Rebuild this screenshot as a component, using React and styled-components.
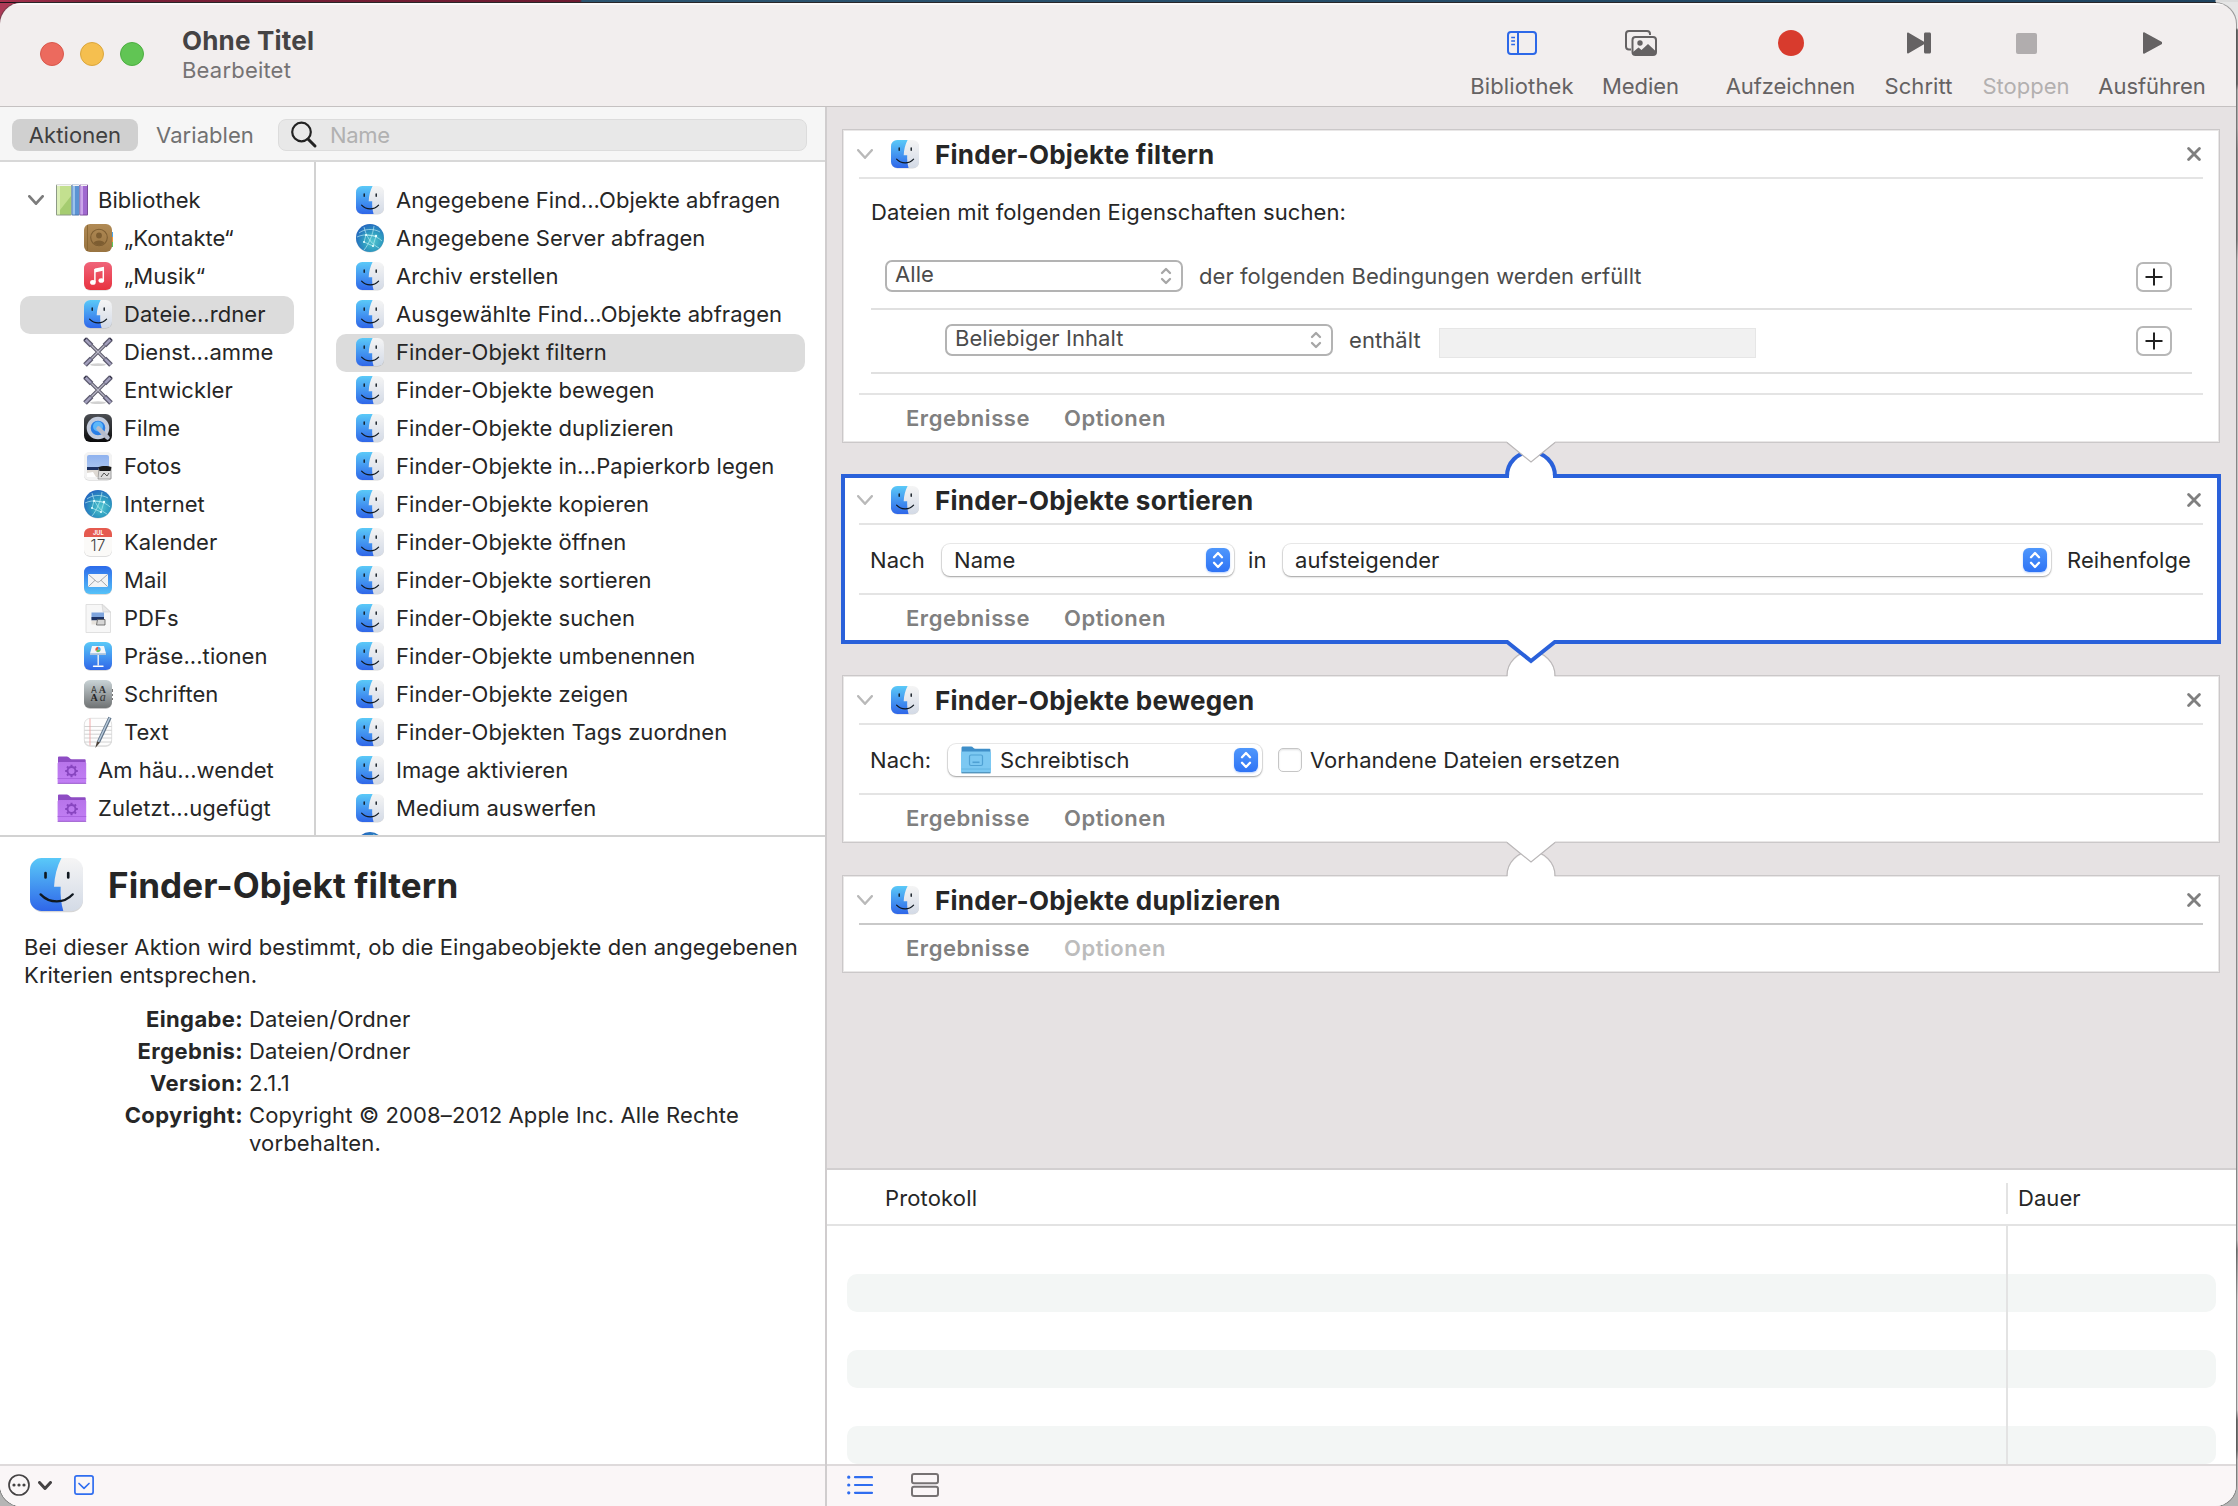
import React from "react";
import styled, { createGlobalStyle, css } from "styled-components";

const GlobalStyle = createGlobalStyle`
  * { box-sizing: border-box; }
  body {
    margin: 0;
    overflow: hidden;
    font-family: Inter, "Liberation Sans", sans-serif;
    font-size: 22px;
    line-height: 28px;
    letter-spacing: 0.06px;
    color: #262626;
  }
  svg { display: block; flex: none; }
`;

/* ---------- window ---------- */

const Desktop = styled.div`
  width: 2238px;
  height: 1506px;
  padding: 3px 2px 0 0;
  background:
    linear-gradient(#1b1419, #1b1419) 0 2px / 2216px 1px no-repeat,
    linear-gradient(90deg, #a8324f 0, #7c2038 90px, #6d1a30 580px, #2d5570 582px, #1f4460 2215px, #dcdcdc 2216px) 0 0 / 100% 2px no-repeat,
    linear-gradient(90deg, #ad3a57 0, #ad3a57 60px, transparent 60px) 0 0 / 100% 40px no-repeat,
    linear-gradient(#e6e6e6 0 28px, #6d6d6d 30px 84px, #a9a9a9 90px 128px, #8e8e8e 150px 240px, #c4c4c4 260px 1240px, #8a8a8a 1250px, #d0d0d0 1300px 1410px, #777 1420px 1450px, #b5b5b5 1460px);
`;

const Window = styled.div`
  height: 1503px;
  display: flex;
  flex-direction: column;
  border-radius: 21px;
  overflow: hidden;
  background: #f2eeee;
  box-shadow: 0 0 0 1px rgba(60, 60, 60, 0.45);
`;

const TitleBar = styled.header`
  flex: none;
  height: 104px;
  display: flex;
  padding: 0 30px 0 40px;
  border-bottom: 1px solid #c5c1c1;
  box-shadow: inset 0 2px 0 #fbf9f9;
`;

const Lights = styled.div`
  display: flex;
  gap: 16px;
  padding-top: 39px;
`;

const Light = styled.span`
  width: 24px;
  height: 24px;
  border-radius: 50%;
  background: ${(p) => p.$color};
  border: 1px solid ${(p) => p.$edge};
`;

const Heading = styled.div`
  margin-left: 38px;
  padding-top: 22px;
  flex: 1;
`;

const DocTitle = styled.div`
  font-size: 26px;
  font-weight: 700;
  line-height: 31px;
  letter-spacing: 0.2px;
  color: #454344;
`;

const DocState = styled.div`
  letter-spacing: 0.2px;
  color: #767374;
`;

const Tool = styled.div`
  width: ${(p) => p.$width}px;
  margin-left: ${(p) => p.$gap}px;
  padding-top: 27px;
  display: flex;
  flex-direction: column;
  align-items: center;
  color: ${(p) => (p.$off ? "#b3b0b0" : "#656263")};
`;

const ToolIcon = styled.div`
  height: 26px;
  display: flex;
  align-items: center;
`;

const ToolLabel = styled.span`
  margin-top: 16px;
  white-space: nowrap;
  letter-spacing: ${(p) => p.$ls}px;
`;

const Panes = styled.div`
  flex: 1;
  min-height: 0;
  display: flex;
`;

const Sidebar = styled.aside`
  width: 827px;
  border-right: 2px solid #d0cdce;
  display: flex;
  flex-direction: column;
  background: #fff;
`;

const Main = styled.main`
  flex: 1;
  display: flex;
  flex-direction: column;
  background: #e6e2e3;
`;

/* ---------- sidebar ---------- */

const FilterBar = styled.div`
  flex: none;
  height: 55px;
  display: flex;
  align-items: flex-start;
  padding: 12px 18px 0 12px;
  background: #f6f6f6;
  border-bottom: 2px solid #d8d8d8;
`;

const Segment = styled.div`
  width: ${(p) => p.$width}px;
  height: 32px;
  border-radius: 8px;
  display: flex;
  align-items: center;
  justify-content: center;
  color: ${(p) => (p.$active ? "#3f3f3f" : "#717171")};
  background: ${(p) => (p.$active ? "#d0d0d0" : "transparent")};
`;

const Search = styled.div`
  flex: 1;
  height: 32px;
  margin-left: 6px;
  padding-left: 11px;
  display: flex;
  align-items: center;
  gap: 12px;
  border-radius: 8px;
  border: 1px solid #dcdcdc;
  background: #e8e8e8;
  color: #b1b1b1;
  letter-spacing: -0.3px;
`;

const Browser = styled.div`
  flex: none;
  height: 675px;
  display: flex;
  border-bottom: 2px solid #d2d2d2;
  overflow: hidden;
`;

const Column = styled.div`
  width: ${(p) => p.$width}px;
  flex: none;
  padding: 20px 20px 0;
  overflow: hidden;
  border-right: ${(p) => (p.$divided ? "2px solid #d2d2d2" : "0")};
`;

const Item = styled.div`
  height: 38px;
  display: flex;
  align-items: center;
  border-radius: 10px;
  padding: 0 0 2px ${(p) => p.$indent}px;
  gap: 12px;
  white-space: nowrap;
  background: ${(p) => (p.$selected ? "#dcdcdc" : "transparent")};
`;

const Disclosure = styled.span`
  width: 16px;
`;

const IconSlot = styled.span`
  width: 32px;
  margin: 0 -2px 0 ${(p) => p.$shift || 0}px;
`;

const Info = styled.section`
  flex: 1;
  padding: 21px 20px 0 24px;
`;

const InfoHead = styled.div`
  display: flex;
  align-items: center;
  gap: 25px;
  padding-left: 6px;
`;

const InfoTitle = styled.h1`
  margin: 0;
  font-size: 35px;
  font-weight: 700;
  line-height: 44px;
  letter-spacing: 0.1px;
`;

const InfoText = styled.p`
  margin: 22px -10px 16px 0;
  letter-spacing: 0.1px;
`;

const Facts = styled.dl`
  margin: 0;
  display: grid;
  grid-template-columns: 219px 1fr;
  column-gap: 6px;
  row-gap: 4px;
`;

const Term = styled.dt`
  text-align: right;
  font-weight: 700;
  letter-spacing: 0.38px;
`;

const Fact = styled.dd`
  margin: 0;
  letter-spacing: 0.14px;
`;

const BottomBar = styled.div`
  flex: none;
  height: 42px;
  display: flex;
  align-items: center;
  border-top: 2px solid #dedadb;
  background: #faf6f7;
  padding-left: ${(p) => p.$pad}px;
  padding-bottom: 2px;
`;

const Spacer = styled.span`
  width: ${(p) => p.$width}px;
`;

/* ---------- workflow ---------- */

const Canvas = styled.div`
  flex: 1;
  padding: 22px 16px 0 15px;
  display: flex;
  flex-direction: column;
  gap: 32px;
`;

const CardBox = styled.section`
  position: relative;
  z-index: ${(p) => p.$level};
  background: #fff;
  box-shadow: ${(p) =>
    p.$selected
      ? "inset 0 0 0 3px #2a61da, 0 0 0 1px #2a61da"
      : "inset 0 0 0 1px #cbc8c9, inset 0 0 0 2px #e9e7e7"};
`;

const joint = css`
  position: absolute;
  left: calc(50% - 30px);
`;

const Socket = styled.svg`
  ${joint}
  top: -30px;
`;

const Plug = styled.svg`
  ${joint}
  top: calc(100% - 6px);
`;

const CardHead = styled.div`
  height: 48px;
  padding: 2px 19px 0 15px;
  display: flex;
  align-items: center;
`;

const CardTitle = styled.h2`
  flex: 1;
  margin: 1px 0 0 16px;
  font-size: 26px;
  line-height: 31px;
  font-weight: 700;
  letter-spacing: 0.25px;
`;

const Rule = styled.div`
  height: 2px;
  margin: 0 17px;
  background: ${(p) => (p.$strong ? "#c9c9c9" : "#e4e4e4")};
`;

const CardFoot = styled.div`
  height: 48px;
  padding: 0 0 2px 64px;
  display: flex;
  align-items: center;
  font-weight: 600;
  letter-spacing: 0.55px;
  color: #808080;
`;

const FootTab = styled.span`
  width: 158px;
  color: ${(p) => (p.$off ? "#bcbcbc" : "inherit")};
`;

const CardRow = styled.div`
  height: 68px;
  padding: 2px 27px 0 28px;
  display: flex;
  align-items: center;
`;

const RowLabel = styled.span`
  width: ${(p) => p.$width}px;
  margin-left: ${(p) => p.$gap || 0}px;
  white-space: nowrap;
`;

const Popup = styled.div`
  height: 32px;
  width: ${(p) => (p.$width ? p.$width + "px" : "auto")};
  flex: ${(p) => (p.$width ? "none" : 1)};
  padding: 0 4px 0 ${(p) => p.$pad}px;
  display: flex;
  align-items: center;
  gap: 9px;
  border-radius: 8px;
  background: #fff;
  box-shadow: 0 0 0 1px rgba(0, 0, 0, 0.08), 0 1px 2px rgba(0, 0, 0, 0.32);
`;

const PopupText = styled.span`
  flex: 1;
`;

const Stepper = styled.span`
  width: 24px;
  height: 24px;
  border-radius: 6px;
  display: flex;
  align-items: center;
  justify-content: center;
  background: linear-gradient(#4f97fc, #2e73f5);
  box-shadow: 0 1px 2px rgba(46, 115, 245, 0.35);
`;

const Checkbox = styled.span`
  width: 24px;
  height: 24px;
  margin: 0 8px 0 16px;
  border-radius: 5px;
  border: 1px solid #c6c6c6;
  box-shadow: inset 0 1px 2px rgba(0, 0, 0, 0.12);
`;

const Rules = styled.div`
  padding: 19px 28px 19px 29px;
`;

const RulesIntro = styled.div`
  margin-bottom: 18px;
  letter-spacing: 0.11px;
`;

const Condition = styled.div`
  height: ${(p) => p.$height}px;
  padding: 0 20px ${(p) => p.$lift || 0}px ${(p) => p.$indent}px;
  display: flex;
  align-items: center;
  border-bottom: 2px solid #e0e0e0;
  color: #4b4b4b;
`;

const OutlinePopup = styled.div`
  width: ${(p) => p.$width}px;
  height: 32px;
  margin-right: 16px;
  padding: 0 9px 4px 8px;
  display: flex;
  align-items: center;
  justify-content: space-between;
  border: 2px solid #b3b3b3;
  border-radius: 7px;
`;

const StepArrows = styled.svg`
  margin-top: 3px;
`;

const Field = styled.span`
  width: 317px;
  height: 30px;
  margin: 5px 0 0 18px;
  background: #f1f1f1;
  border: 1px solid #e6e6e6;
`;

const AddButton = styled.span`
  width: 36px;
  height: 30px;
  margin: 2px 0 0 auto;
  border: 2px solid #b7b7b7;
  border-radius: 7px;
  display: flex;
  align-items: center;
  justify-content: center;
`;

/* ---------- log ---------- */

const Log = styled.section`
  flex: none;
  height: 296px;
  border-top: 2px solid #d2cfd0;
  background: #fff;
  display: flex;
  flex-direction: column;
`;

const LogHead = styled.div`
  height: 56px;
  padding: 2px 0 0 58px;
  display: flex;
  align-items: center;
  border-bottom: 2px solid #e3e3e3;
`;

const LogName = styled.span`
  flex: 1;
  letter-spacing: 0.15px;
`;

const LogTime = styled.span`
  width: 230px;
  height: 31px;
  padding: 1px 0 0 10px;
  border-left: 2px solid #e3e3e3;
`;

const LogBody = styled.div`
  flex: 1;
  display: flex;
`;

const LogColumn = styled.div`
  padding: ${(p) => (p.$last ? "10px 20px 0 0" : "10px 0 0 20px")};
  flex: ${(p) => (p.$last ? "none" : 1)};
  width: ${(p) => (p.$last ? "230px" : "auto")};
  border-left: ${(p) => (p.$last ? "2px solid #e3e3e3" : "0")};
`;

const Stripe = styled.div`
  height: 38px;
  background: ${(p) => (p.$filled ? "#f3f6f5" : "transparent")};
  border-radius: ${(p) => (p.$last ? "0 10px 10px 0" : "10px 0 0 10px")};
`;

/* ---------- drawings ---------- */

const DefsSvg = styled.svg`
  position: absolute;
`;

const Defs = () => (
  <DefsSvg width="0" height="0">
    <defs>
      <linearGradient id="fBlue" x1="0" y1="0" x2="0" y2="1">
        <stop offset="0" stopColor="#5ac9f8" />
        <stop offset="1" stopColor="#2f66e9" />
      </linearGradient>
      <linearGradient id="fPale" x1="0" y1="0" x2="0" y2="1">
        <stop offset="0" stopColor="#f5f5f5" />
        <stop offset="1" stopColor="#d3dae6" />
      </linearGradient>
      <radialGradient id="globe" cx="0.6" cy="0.62" r="0.65">
        <stop offset="0" stopColor="#52c6cf" />
        <stop offset="0.5" stopColor="#2f9dc0" />
        <stop offset="1" stopColor="#2468c0" />
      </radialGradient>
      <linearGradient id="red" x1="0" y1="0" x2="0" y2="1">
        <stop offset="0" stopColor="#f0647a" />
        <stop offset="1" stopColor="#e8323f" />
      </linearGradient>
      <linearGradient id="brown" x1="0" y1="0" x2="0" y2="1">
        <stop offset="0" stopColor="#b08a55" />
        <stop offset="1" stopColor="#997441" />
      </linearGradient>
      <linearGradient id="dark" x1="0" y1="0" x2="0" y2="1">
        <stop offset="0" stopColor="#4c4f54" />
        <stop offset="1" stopColor="#0a0a0b" />
      </linearGradient>
      <linearGradient id="mail" x1="0" y1="0" x2="0" y2="1">
        <stop offset="0" stopColor="#2c6aea" />
        <stop offset="1" stopColor="#56c2f8" />
      </linearGradient>
      <linearGradient id="grey" x1="0" y1="0" x2="0" y2="1">
        <stop offset="0" stopColor="#c9d3d6" />
        <stop offset="1" stopColor="#6f7273" />
      </linearGradient>
      <linearGradient id="sky" x1="0" y1="0" x2="0" y2="1">
        <stop offset="0" stopColor="#8fb2ef" />
        <stop offset="1" stopColor="#b9cff0" />
      </linearGradient>
      <linearGradient id="violet" x1="0" y1="0" x2="0" y2="1">
        <stop offset="0" stopColor="#b774ea" />
        <stop offset="1" stopColor="#c27ff5" />
      </linearGradient>
    </defs>
  </DefsSvg>
);

const Finder = ({ size = 28 }) => (
  <svg width={size} height={size} viewBox="0 0 28 28" overflow="visible">
    <rect x="0.4" y="1" width="27.6" height="27.6" rx="6.2" fill="#000" opacity="0.16" />
    <rect width="28" height="28" rx="6.2" fill="url(#fPale)" />
    <path d="M6.2 0H16.6C14.2 4.6 13 9.6 12.7 15.2H16.2C16 19.6 16.4 24 17.6 28H6.2A6.2 6.2 0 0 1 0 21.8V6.2A6.2 6.2 0 0 1 6.2 0Z" fill="url(#fBlue)" />
    <path d="M8.2 7.9V10.3M20.2 7.9V10.3" stroke="#101820" strokeWidth="1.4" strokeLinecap="round" />
    <path d="M5.6 19.2C10.4 24.2 18 24.2 22.6 19.2" fill="none" stroke="#101820" strokeWidth="1.2" strokeLinecap="round" />
  </svg>
);

const Globe = () => (
  <svg width="28" height="28" viewBox="0 0 28 28" overflow="visible">
    <circle cx="14" cy="14.6" r="14" fill="#000" opacity="0.16" />
    <circle cx="14" cy="14" r="14" fill="url(#globe)" />
    <path d="M3 9C8 5 17 4 24 8M1 13C9 9 20 11 26 17M8 3C10 12 15 20 23 24M18 2C17 10 13 20 8 26M10 11L20 12L17 22L8 18Z" fill="none" stroke="#c9f5f8" strokeWidth="0.8" opacity="0.75" />
    <g fill="#e8ffff"><circle cx="10" cy="11" r="1.1" /><circle cx="20" cy="12" r="1.2" /><circle cx="17" cy="22" r="1.1" /><circle cx="8" cy="18" r="1" /></g>
  </svg>
);

const Books = () => (
  <svg width="32" height="32" viewBox="0 0 32 32">
    <rect x="0" y="0.5" width="15.5" height="31" rx="1" fill="#8d9a86" />
    <path d="M1 2H15V30.5H1Z" fill="#a5cc70" />
    <path d="M1 2H4V30.5H1Z" fill="#dcefb9" />
    <path d="M4 2H15V12L4 26Z" fill="#c3e08f" />
    <rect x="15.5" y="0.5" width="8" height="31" rx="1" fill="#4d75a8" />
    <path d="M16.5 2H23V30.5H16.5Z" fill="#5b93d3" />
    <path d="M16.5 2H19V30.5H16.5Z" fill="#9cc3ec" />
    <rect x="23.5" y="0.5" width="8.5" height="31" rx="1" fill="#7a4c9a" />
    <path d="M24.3 2H31V30.5H24.3Z" fill="#9f68cf" />
    <path d="M24.3 2H27V30.5H24.3Z" fill="#cba5ea" />
    <path d="M1 1.2H15M16.5 1.2H23M24.5 1.2H31" stroke="#f3f3f3" strokeWidth="1.6" />
  </svg>
);

const Contacts = () => (
  <svg width="28" height="28" viewBox="0 0 28 28" overflow="visible">
    <path d="M27 8H29V13H27Z" fill="#4aa4e8" /><path d="M27 13H29V18H27Z" fill="#f0953a" /><path d="M27 18H29V23H27Z" fill="#5cc65a" />
    <rect width="28" height="28" rx="6" fill="url(#brown)" />
    <path d="M3.5 1V27" stroke="#84622f" strokeWidth="0.8" />
    <circle cx="15" cy="13.5" r="8.3" fill="none" stroke="#7d5d31" strokeWidth="1.1" />
    <circle cx="15" cy="11.5" r="2.9" fill="#7d5d31" />
    <path d="M9.5 19C10.5 15.6 19.5 15.6 20.5 19C17.5 22 12.5 22 9.5 19Z" fill="#7d5d31" />
  </svg>
);

const Music = () => (
  <svg width="28" height="28" viewBox="0 0 28 28" overflow="visible">
    <rect y="0.8" width="28" height="28" rx="6.2" fill="#000" opacity="0.15" />
    <rect width="28" height="28" rx="6.2" fill="url(#red)" />
    <path d="M10.8 6.6L20 4.7V8.6L10.8 10.5Z" fill="#fff" />
    <path d="M10.9 7V20M19.3 5.5V18.2" stroke="#fff" strokeWidth="1.5" />
    <ellipse cx="8.9" cy="20.4" rx="2.8" ry="2.3" fill="#fff" /><ellipse cx="17.3" cy="18.5" rx="2.8" ry="2.3" fill="#fff" />
  </svg>
);

const Tools = () => (
  <svg width="28" height="28" viewBox="0 0 28 28" overflow="visible">
    <ellipse cx="14" cy="26.7" rx="8" ry="1.4" fill="#000" opacity="0.18" />
    <path d="M3 3L25 25M25 3L3 25" stroke="#5d5b6b" strokeWidth="3.4" />
    <path d="M3 3L25 25M25 3L3 25" stroke="#b9b7c6" strokeWidth="1.3" />
    <path d="M1 1L7.500 7.500M27 1L20.500 7.500M1 27L7.500 20.500M27 27L20.500 20.500" stroke="#5f5d72" strokeWidth="5.200" />
    <path d="M1.300 1.300L7 7M26.700 1.300L21 7M1.300 26.700L7 21M26.700 26.700L21 21" stroke="#a3a0bd" strokeWidth="2.400" />
    <path d="M0 2.200L2.200 0M28 2.200L25.800 0" stroke="#37354a" strokeWidth="1.500" />
  </svg>
);

const QuickTime = () => (
  <svg width="28" height="28" viewBox="0 0 28 28">
    <rect width="28" height="28" rx="6.2" fill="url(#dark)" />
    <circle cx="14" cy="14" r="9.3" fill="#2a7fe6" stroke="#c3cbdb" strokeWidth="4" />
    <circle cx="14" cy="12.5" r="5" fill="#5db7fa" />
    <path d="M14.5 14.5L23.500 23.500" stroke="#b6bccb" strokeWidth="4.5" strokeLinecap="round" />
  </svg>
);

const Photos = () => (
  <svg width="28" height="28" viewBox="0 0 28 28" overflow="visible">
    <rect y="0.8" width="28" height="28" rx="5" fill="#000" opacity="0.14" />
    <rect width="28" height="28" rx="5" fill="#f3f3f3" />
    <rect x="3" y="3" width="22" height="22" rx="2" fill="url(#sky)" />
    <path d="M3 15H25V18H3Z" fill="#1d3263" />
    <path d="M3 18H25V25H3Z" fill="#ded9d3" />
    <path d="M3 21L9 20L12 25H3Z" fill="#fff" />
    <path d="M15 16H27V27H14Z" fill="#dcdcdc" stroke="#888" strokeWidth="0.7" />
    <path d="M14.5 15C17 13.5 25 13.5 27.5 15L26.5 19H15.5Z" fill="#191919" />
    <path d="M17 25L20 21L23 24L25 21" fill="none" stroke="#555" strokeWidth="1" />
  </svg>
);

const Tiny = styled.text`
  font-family: Inter, sans-serif;
  letter-spacing: 0;
`;

const Serif = styled.text`
  font-family: "Liberation Serif", serif;
  letter-spacing: 0;
`;

const Calendar = () => (
  <svg width="28" height="28" viewBox="0 0 28 28" overflow="visible">
    <rect y="0.8" width="28" height="28" rx="6" fill="#000" opacity="0.18" />
    <rect width="28" height="28" rx="6" fill="#fbfaf8" />
    <path d="M0 9V6A6 6 0 0 1 6 0H22A6 6 0 0 1 28 6V9Z" fill="#e55a4f" />
    <Tiny x="14.3" y="7.3" textAnchor="middle" fontSize="5.6" fontWeight="700" fill="#fff">JUL</Tiny>
    <Tiny x="14" y="23" textAnchor="middle" fontSize="15.5" fontWeight="300" fill="#3d3d3d">17</Tiny>
  </svg>
);

const Mail = () => (
  <svg width="28" height="28" viewBox="0 0 28 28" overflow="visible">
    <rect y="0.8" width="28" height="28" rx="6.2" fill="#000" opacity="0.18" />
    <rect width="28" height="28" rx="6.2" fill="url(#mail)" />
    <rect x="4" y="8" width="20" height="13" rx="1.2" fill="#f3f4f5" />
    <path d="M4.5 8.5L12.5 15.5C13.5 16.3 14.5 16.3 15.5 15.5L23.5 8.5M4.5 20.5L11 14.3M23.5 20.5L17 14.3" fill="none" stroke="#9a9da1" strokeWidth="0.9" />
  </svg>
);

const Pdf = () => (
  <svg width="28" height="29" viewBox="0 0 28 29">
    <path d="M2 0.5H19L26.5 8V28.5H2Z" fill="#f7f7f7" stroke="#dcdcdc" strokeWidth="0.9" />
    <path d="M18 0.5L19 8H26.5Z" fill="#e8e8e8" stroke="#cfcfcf" strokeWidth="0.6" />
    <rect x="7.5" y="8.5" width="12.5" height="7" fill="#7ea4dc" />
    <rect x="7.5" y="13" width="12.5" height="3.5" fill="#1d3263" />
    <rect x="7.5" y="16.5" width="6" height="4" fill="#e6e2dc" />
    <path d="M13.5 15.5H21V21H12.5Z" fill="#d6d6d6" stroke="#5b5b5b" strokeWidth="0.8" />
  </svg>
);

const Keynote = () => (
  <svg width="28" height="28" viewBox="0 0 28 28" overflow="visible">
    <rect y="0.8" width="28" height="28" rx="6.2" fill="#000" opacity="0.18" />
    <rect width="28" height="28" rx="6.2" fill="url(#fBlue)" />
    <path d="M8 4H20L22 11.5H6Z" fill="#f4f6f9" />
    <path d="M6 11.5H22V12.8H6Z" fill="#c5ccd6" />
    <path d="M14.2 13V23.5" stroke="#e9edf3" strokeWidth="1.5" />
    <path d="M9.5 24.200H19" stroke="#fff" strokeWidth="1.4" strokeLinecap="round" />
    <path d="M14 7.5V4.8A2.7 2.7 0 0 1 16.6 8.2Z" fill="#4ba8f0" />
    <path d="M14 7.5L16.6 8.2A2.7 2.7 0 0 1 11.8 9Z" fill="#63c15b" />
    <path d="M14 7.5L11.8 9A2.7 2.7 0 0 1 14 4.8Z" fill="#e8543f" />
  </svg>
);

const Fonts = () => (
  <svg width="28" height="28" viewBox="0 0 28 28" overflow="visible">
    <rect y="0.8" width="28" height="28" rx="6" fill="#000" opacity="0.3" />
    <rect width="28" height="28" rx="6" fill="url(#grey)" />
    <path d="M28.5 9V12M28.5 14V16M28.5 18V20" stroke="#777" strokeWidth="1" />
    <Tiny x="7" y="13" fontSize="8.5" fill="#333">A</Tiny>
    <Serif x="14.8" y="13" fontSize="10" fontWeight="700" fill="#333">A</Serif>
    <Serif x="6.5" y="21" fontSize="10" fontWeight="700" fill="#222">A</Serif>
    <Serif x="15.8" y="21" fontSize="12" fontStyle="italic" fill="#333">a</Serif>
  </svg>
);

const TextDoc = () => (
  <svg width="28" height="28" viewBox="0 0 28 28" overflow="visible">
    <rect y="0.8" width="28" height="28" rx="6" fill="#000" opacity="0.15" />
    <rect x="0.3" y="0.3" width="27.4" height="27.4" rx="6" fill="#fdfdfd" stroke="#dadada" strokeWidth="0.7" />
    <path d="M0.5 8.5H27.5M0.5 12.3H27.5M0.5 16.2H27.5M0.5 20H27.5M0.500 24H27.5" stroke="#c6c6c6" strokeWidth="0.8" />
    <path d="M6 0.5V27.5" stroke="#eda2a2" strokeWidth="0.9" />
    <path d="M26 -0.500L14.5 24" stroke="#5f7388" strokeWidth="3.4" />
    <path d="M25.8 -0.500L14.3 24" stroke="#b9cbdc" strokeWidth="1.4" />
    <path d="M13 23.2L16 24.6L11.3 30Z" fill="#4a4038" />
  </svg>
);

const SmartFolder = () => (
  <svg width="32" height="28" viewBox="0 0 32 28" overflow="visible">
    <path d="M2 1.5C2 0.8 2.6 0.5 3.3 0.5H11C13 0.5 13.5 3.2 15.5 3.2H28.5C29.3 3.2 29.7 3.7 29.7 4.4V12H2Z" fill="#8e4cc4" />
    <rect x="1.6" y="6" width="28.6" height="21.5" rx="1.5" fill="url(#violet)" />
    <path d="M1.6 22.5H30.2" stroke="#a45edb" strokeWidth="0.8" />
    <path d="M1.6 27.3H30.2" stroke="#9a5ccc" strokeWidth="1" />
    <g transform="translate(15.5 15)" stroke="#8745bf" fill="none">
      <circle r="4" strokeWidth="1.9" />
      <path d="M0 -6.3V-4.5M0 6.3V4.5M-6.3 0H-4.5M6.3 0H4.5M-4.5 -4.5L-3.2 -3.2M4.5 4.5L3.2 3.2M-4.5 4.5L-3.2 3.2M4.5 -4.5L3.2 -3.2" strokeWidth="2" />
    </g>
  </svg>
);

const DesktopFolder = () => (
  <svg width="30" height="28" viewBox="0 0 30 28">
    <path d="M0.5 2C0.5 1 1 0.5 2 0.5H10C12 0.5 12.5 2.8 14.5 2.8H28C29 2.8 29.5 3.3 29.5 4.2V12H0.5Z" fill="#3f8fc9" />
    <rect x="0" y="5.5" width="30" height="21.5" rx="1.5" fill="#7cc8f2" />
    <path d="M0.5 23H29.5" stroke="#5cb0df" strokeWidth="0.8" />
    <path d="M0.5 26.8H29.5" stroke="#4a8bb3" strokeWidth="1.2" />
    <rect x="8.5" y="9" width="13" height="10.5" rx="1.5" fill="none" stroke="#4fa1d4" strokeWidth="1.2" />
    <path d="M11.5 16.3H18.5" stroke="#4fa1d4" strokeWidth="1.6" />
  </svg>
);

const Chevron = ({ width, height, color, weight }) => (
  <svg width={width} height={height} viewBox={`0 0 ${width} ${height}`}>
    <path
      d={`M${weight / 2} ${weight / 2}L${width / 2} ${height - weight / 2}L${width - weight / 2} ${weight / 2}`}
      fill="none" stroke={color} strokeWidth={weight} strokeLinecap="round" strokeLinejoin="round"
    />
  </svg>
);

const Magnifier = () => (
  <svg width="28" height="28" viewBox="0 0 28 28">
    <circle cx="11.5" cy="11" r="9.3" fill="none" stroke="#222" strokeWidth="2.2" />
    <path d="M18 18L25 25" stroke="#222" strokeWidth="3" strokeLinecap="round" />
  </svg>
);

const LibraryGlyph = () => (
  <svg width="30" height="24" viewBox="0 0 30 24" fill="none" stroke="#2d68e8" strokeWidth="2">
    <rect x="1" y="1" width="28" height="22" rx="3" />
    <path d="M11 1V23" />
    <path d="M4.2 6.5H8M4.2 10H8M4.2 13.5H8" strokeWidth="1.7" />
  </svg>
);

const MediaGlyph = () => (
  <svg width="32" height="26" viewBox="0 0 32 26">
    <path d="M6 19.5H4A3 3 0 0 1 1 16.5V4A3 3 0 0 1 4 1H22A3 3 0 0 1 25 4V5" fill="none" stroke="#656263" strokeWidth="2" />
    <rect x="7.5" y="7" width="23.5" height="18" rx="3" fill="none" stroke="#656263" strokeWidth="2" />
    <circle cx="15" cy="13" r="2.7" fill="#656263" />
    <path d="M8 22L13.5 17.5L16.5 20L23 14L30.5 21V23A2 2 0 0 1 28.5 25H10A2 2 0 0 1 8 23Z" fill="#656263" />
  </svg>
);

const StepGlyph = () => (
  <svg width="24" height="22" viewBox="0 0 24 22" fill="#656263">
    <path d="M0 1.5C0 0.5 0.8 0.2 1.6 0.7L17 9.8V2C17 1.2 17.6 0.5 18.5 0.5H22.5C23.4 0.5 24 1.2 24 2V20C24 20.8 23.4 21.5 22.5 21.5H18.5C17.6 21.5 17 20.8 17 20V12.2L1.6 21.3C0.8 21.8 0 21.5 0 20.5Z" />
  </svg>
);

const SocketJoint = ({ selected }) => (
  <Socket width="60" height="36" viewBox="0 0 60 36">
    <path d={selected ? "M8 33V31A22 22 0 0 1 52 31V33Z" : "M6.5 33V31A23.5 23.5 0 0 1 53.5 31V33Z"} fill="#fff" />
    {selected ? (
      <path d="M6 33V31A24 24 0 0 1 54 31V33" fill="none" stroke="#2a61da" strokeWidth="4" />
    ) : (
      <path d="M6 31V30.5A24 24 0 0 1 54 30.5V31" fill="none" stroke="#b9b6b7" strokeWidth="1.1" />
    )}
  </Socket>
);

const PlugJoint = ({ selected }) => (
  <Plug width="60" height="32" viewBox="0 0 60 32">
    <path d={selected ? "M6 2.5H54V5L30 24L6 5Z" : "M6 3.5H54V5L30 25L6 5Z"} fill="#fff" />
    {selected ? (
      <path d="M5 5H6.2L30 24L53.8 5H55" fill="none" stroke="#2a61da" strokeWidth="4" />
    ) : (
      <path d="M6 5.5L30 25L54 5.5" fill="none" stroke="#b9b6b7" strokeWidth="1.1" />
    )}
  </Plug>
);

const CloseGlyph = () => (
  <svg width="14" height="14" viewBox="0 0 14 14">
    <path d="M1.6 1.6L12.4 12.4M12.4 1.6L1.6 12.4" stroke="#7f7f7f" strokeWidth="2.8" strokeLinecap="round" />
  </svg>
);

const UpDown = () => (
  <Stepper>
    <svg width="12" height="18" viewBox="0 0 12 18" fill="none" stroke="#fff" strokeWidth="2.3" strokeLinecap="round" strokeLinejoin="round">
      <path d="M2 6.2L6 2L10 6.2M2 11.8L6 16L10 11.8" />
    </svg>
  </Stepper>
);

const GreyUpDown = () => (
  <StepArrows width="12" height="18" viewBox="0 0 12 18" fill="none" stroke="#a6a6a6" strokeWidth="2.3" strokeLinecap="round" strokeLinejoin="round">
    <path d="M2 6L6 2L10 6M2 12L6 16L10 12" />
  </StepArrows>
);

const Add = () => (
  <AddButton>
    <svg width="18" height="18" viewBox="0 0 18 18">
      <path d="M9 0.5V17.5M0.5 9H17.5" stroke="#222" strokeWidth="2" />
    </svg>
  </AddButton>
);

/* ---------- content ---------- */

const library = [
  ["„Kontakte“", Contacts],
  ["„Musik“", Music],
  ["Dateie...rdner", Finder],
  ["Dienst...amme", Tools],
  ["Entwickler", Tools],
  ["Filme", QuickTime],
  ["Fotos", Photos],
  ["Internet", Globe],
  ["Kalender", Calendar],
  ["Mail", Mail],
  ["PDFs", Pdf],
  ["Präse...tionen", Keynote],
  ["Schriften", Fonts],
  ["Text", TextDoc],
];

const actions = [
  "Angegebene Find...Objekte abfragen",
  "Angegebene Server abfragen",
  "Archiv erstellen",
  "Ausgewählte Find...Objekte abfragen",
  "Finder-Objekt filtern",
  "Finder-Objekte bewegen",
  "Finder-Objekte duplizieren",
  "Finder-Objekte in...Papierkorb legen",
  "Finder-Objekte kopieren",
  "Finder-Objekte öffnen",
  "Finder-Objekte sortieren",
  "Finder-Objekte suchen",
  "Finder-Objekte umbenennen",
  "Finder-Objekte zeigen",
  "Finder-Objekten Tags zuordnen",
  "Image aktivieren",
  "Medium auswerfen",
];

const facts = [
  ["Eingabe:", "Dateien/Ordner"],
  ["Ergebnis:", "Dateien/Ordner"],
  ["Version:", "2.1.1"],
  ["Copyright:", "Copyright © 2008–2012 Apple Inc. Alle Rechte vorbehalten."],
];

const Card = ({ title, level, selected, socket, plug, strongRule, optionsOff, children }) => (
  <CardBox $selected={selected} $level={level}>
    {socket && <SocketJoint selected={selected} />}
    <CardHead>
      <Chevron width={16} height={10} color="#b9b9b9" weight={2.4} />
      <Spacer $width={18} />
      <Finder />
      <CardTitle>{title}</CardTitle>
      <CloseGlyph />
    </CardHead>
    <Rule $strong={strongRule} />
    {children}
    {children && <Rule />}
    <CardFoot>
      <FootTab>Ergebnisse</FootTab>
      <FootTab $off={optionsOff}>Optionen</FootTab>
    </CardFoot>
    {plug && <PlugJoint selected={selected} />}
  </CardBox>
);

const stripes = [0, 1, 0, 1, 0, 1];

export default function App() {
  return (
    <Desktop>
      <GlobalStyle />
      <Defs />
      <Window>
        <TitleBar>
          <Lights>
            <Light $color="#ec6a5e" $edge="#d9574b" />
            <Light $color="#f5bf4f" $edge="#dba63c" />
            <Light $color="#61c554" $edge="#4dae41" />
          </Lights>
          <Heading>
            <DocTitle>Ohne Titel</DocTitle>
            <DocState>Bearbeitet</DocState>
          </Heading>
          <Tool $width={104} $gap={0}>
            <ToolIcon><LibraryGlyph /></ToolIcon>
            <ToolLabel $ls={0.12}>Bibliothek</ToolLabel>
          </Tool>
          <Tool $width={77} $gap={28}>
            <ToolIcon><MediaGlyph /></ToolIcon>
            <ToolLabel $ls={-0.05}>Medien</ToolLabel>
          </Tool>
          <Tool $width={129} $gap={47}>
            <ToolIcon>
              <svg width="26" height="26" viewBox="0 0 26 26"><circle cx="13" cy="13" r="13" fill="#d83b2d" /></svg>
            </ToolIcon>
            <ToolLabel $ls={-0.12}>Aufzeichnen</ToolLabel>
          </Tool>
          <Tool $width={71} $gap={28}>
            <ToolIcon><StepGlyph /></ToolIcon>
            <ToolLabel $ls={0.05}>Schritt</ToolLabel>
          </Tool>
          <Tool $width={88} $gap={28} $off>
            <ToolIcon>
              <svg width="21" height="21" viewBox="0 0 21 21"><rect width="21" height="21" rx="2" fill="#b1adae" /></svg>
            </ToolIcon>
            <ToolLabel $ls={0}>Stoppen</ToolLabel>
          </Tool>
          <Tool $width={108} $gap={28}>
            <ToolIcon>
              <svg width="20" height="22" viewBox="-1 0 20 22"><path d="M0 1.3C0 0.3 0.8 0 1.6 0.5L19.2 10.2C20 10.7 20 11.3 19.2 11.8L1.6 21.5C0.8 22 0 21.7 0 20.7Z" fill="#656263" /></svg>
            </ToolIcon>
            <ToolLabel $ls={-0.05}>Ausführen</ToolLabel>
          </Tool>
        </TitleBar>

        <Panes>
          <Sidebar>
            <FilterBar>
              <Segment $width={126} $active>Aktionen</Segment>
              <Segment $width={134}>Variablen</Segment>
              <Search><Magnifier />Name</Search>
            </FilterBar>
            <Browser>
              <Column $width={316} $divided>
                <Item $indent={8}>
                  <Disclosure><Chevron width={16} height={10} color="#7c7c7c" weight={2.8} /></Disclosure>
                  <IconSlot><Books /></IconSlot>
                  <span>Bibliothek</span>
                </Item>
                {library.map(([name, Icon]) => (
                  <Item key={name} $indent={64} $selected={name === "Dateie...rdner"}>
                    <Icon />
                    <span>{name}</span>
                  </Item>
                ))}
                {["Am häu...wendet", "Zuletzt...ugefügt"].map((name) => (
                  <Item key={name} $indent={36}>
                    <IconSlot><SmartFolder /></IconSlot>
                    <span>{name}</span>
                  </Item>
                ))}
              </Column>
              <Column $width={509}>
                {actions.map((name) => (
                  <Item key={name} $indent={20} $selected={name === "Finder-Objekt filtern"}>
                    {name === "Angegebene Server abfragen" ? <Globe /> : <Finder />}
                    <span>{name}</span>
                  </Item>
                ))}
                <Item $indent={20}><Globe /></Item>
              </Column>
            </Browser>
            <Info>
              <InfoHead>
                <Finder size={53} />
                <InfoTitle>Finder-Objekt filtern</InfoTitle>
              </InfoHead>
              <InfoText>
                Bei dieser Aktion wird bestimmt, ob die Eingabeobjekte den angegebenen Kriterien entsprechen.
              </InfoText>
              <Facts>
                {facts.map(([term, fact]) => (
                  <React.Fragment key={term}>
                    <Term>{term}</Term>
                    <Fact>{fact}</Fact>
                  </React.Fragment>
                ))}
              </Facts>
            </Info>
            <BottomBar $pad={8}>
              <svg width="22" height="22" viewBox="0 0 22 22">
                <circle cx="11" cy="11" r="10" fill="none" stroke="#454344" strokeWidth="1.7" />
                <g fill="#454344"><circle cx="6" cy="11" r="1.6" /><circle cx="11" cy="11" r="1.6" /><circle cx="16" cy="11" r="1.6" /></g>
              </svg>
              <Spacer $width={8} />
              <Chevron width={14} height={9} color="#454344" weight={3} />
              <Spacer $width={22} />
              <svg width="20" height="20" viewBox="0 0 20 20" fill="none" stroke="#2f6df0" strokeLinecap="round" strokeLinejoin="round">
                <rect x="0.9" y="0.9" width="18.2" height="18.2" rx="2" strokeWidth="1.7" />
                <path d="M5 8.5L10 13.3L15 8.5" strokeWidth="1.7" />
              </svg>
            </BottomBar>
          </Sidebar>

          <Main>
            <Canvas>
              <Card title="Finder-Objekte filtern" level={4} plug>
                <Rules>
                  <RulesIntro>Dateien mit folgenden Eigenschaften suchen:</RulesIntro>
                  <Condition $height={66} $indent={14}>
                    <OutlinePopup $width={298}>Alle<GreyUpDown /></OutlinePopup>
                    <span>der folgenden Bedingungen werden erfüllt</span>
                    <Add />
                  </Condition>
                  <Condition $height={64} $indent={74} $lift={2}>
                    <OutlinePopup $width={388}>Beliebiger Inhalt<GreyUpDown /></OutlinePopup>
                    <span>enthält</span>
                    <Field />
                    <Add />
                  </Condition>
                </Rules>
              </Card>

              <Card title="Finder-Objekte sortieren" level={3} selected socket plug>
                <CardRow>
                  <RowLabel $width={72}>Nach</RowLabel>
                  <Popup $width={292} $pad={12}>
                    <PopupText>Name</PopupText>
                    <UpDown />
                  </Popup>
                  <RowLabel $width={35} $gap={14}>in</RowLabel>
                  <Popup $pad={12}>
                    <PopupText>aufsteigender</PopupText>
                    <UpDown />
                  </Popup>
                  <RowLabel $width={126} $gap={16}>Reihenfolge</RowLabel>
                </CardRow>
              </Card>

              <Card title="Finder-Objekte bewegen" level={2} socket plug>
                <CardRow>
                  <RowLabel $width={78}>Nach:</RowLabel>
                  <Popup $width={314} $pad={13}>
                    <DesktopFolder />
                    <PopupText>Schreibtisch</PopupText>
                    <UpDown />
                  </Popup>
                  <Checkbox />
                  <span>Vorhandene Dateien ersetzen</span>
                </CardRow>
              </Card>

              <Card title="Finder-Objekte duplizieren" level={1} socket strongRule optionsOff />
            </Canvas>

            <Log>
              <LogHead>
                <LogName>Protokoll</LogName>
                <LogTime>Dauer</LogTime>
              </LogHead>
              <LogBody>
                <LogColumn>
                  {stripes.map((filled, i) => <Stripe key={i} $filled={filled} />)}
                </LogColumn>
                <LogColumn $last>
                  {stripes.map((filled, i) => <Stripe key={i} $filled={filled} $last />)}
                </LogColumn>
              </LogBody>
            </Log>
            <BottomBar $pad={20}>
              <svg width="26" height="20" viewBox="0 0 26 20" stroke="#2f6df0" strokeLinecap="round">
                <path d="M8 2.2H25M8 10H25M8 17.8H25" strokeWidth="2.2" />
                <path d="M1.7 2.2H1.8M1.7 10H1.8M1.7 17.8H1.8" strokeWidth="3.2" />
              </svg>
              <Spacer $width={38} />
              <svg width="28" height="24" viewBox="0 0 28 24" fill="none" stroke="#767273" strokeWidth="2">
                <rect x="1" y="1" width="26" height="9.3" rx="2" />
                <rect x="1" y="13.7" width="26" height="9.3" rx="2" />
              </svg>
            </BottomBar>
          </Main>
        </Panes>
      </Window>
    </Desktop>
  );
}
